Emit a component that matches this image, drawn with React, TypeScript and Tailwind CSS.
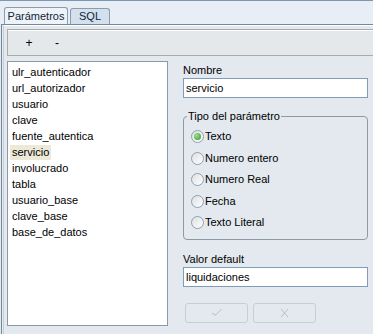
import React from "react";

const items = [
    "ulr_autenticador",
    "url_autorizador",
    "usuario",
    "clave",
    "fuente_autentica",
    "servicio",
    "involucrado",
    "tabla",
    "usuario_base",
    "clave_base",
    "base_de_datos",
];

const tipos = ["Texto", "Numero entero", "Numero Real", "Fecha", "Texto Literal"];

function Radio({ checked }: { checked: boolean }) {
    return (
        <span className="w-[13px] h-[13px] rounded-full border border-[#8fa0b0] bg-gradient-to-br from-[#dcdfe2] to-[#ffffff] flex items-center justify-center shrink-0">
            {checked && (
                <span className="w-[7px] h-[7px] rounded-full bg-[radial-gradient(circle_at_35%_35%,#9be08f,#2f9a22)]" />
            )}
        </span>
    );
}

export default function App() {
    const selected = "servicio";
    const tipo = "Texto";

    return (
        <div
            className="w-[373px] h-[334px] overflow-hidden bg-[#e3e9ee] text-[11px] text-black leading-none"
            style={{ fontFamily: '"Liberation Sans", Arial, sans-serif' }}
        >
            {/* tab strip */}
            <div className="h-[24px] border-t border-[#7d97b0] bg-[#e7eef5] flex items-end pl-[4px] gap-[2px]">
                <div className="h-[17px] w-[64px] border border-b-0 border-[#8b9bab] rounded-t-[3px] bg-[#eef3f8] flex items-center justify-center text-[#10243a]">
                    Parámetros
                </div>
                <div className="h-[16px] w-[40px] border border-b-0 border-[#8b9bab] rounded-t-[3px] bg-[#d3e0ed] flex items-center justify-center text-[#10243a]">
                    SQL
                </div>
            </div>

            {/* panel */}
            <div className="ml-[1px] h-[310px] border-l border-t border-[#74889c]">
                <div className="h-full ml-[1px] border-l border-t border-[#c6ced6] border-t-white">
                    {/* toolbar */}
                    <div className="mt-[3px] ml-[3px] h-[27px] border-t border-b border-l border-[#a8aca9] bg-[#e4e8eb] flex items-center">
                        <div className="h-full w-full border-t border-white flex items-center">
                            <span className="ml-[16px] w-[10px] text-center text-[12px]">+</span>
                            <span className="ml-[18px] w-[10px] text-center text-[12px]">-</span>
                        </div>
                    </div>

                    <div className="flex mt-[5px] ml-[3px]">
                        {/* list */}
                        <div className="w-[161px] h-[265px] border border-[#8c9aa8] bg-white pt-[2px] pl-[2px]">
                            {items.map((it) => (
                                <div key={it} className="h-[16px] flex items-center">
                                    <span
                                        className={
                                            "px-[2px] h-[15px] flex items-center " +
                                            (it === selected ? "bg-[#ece9d8]" : "")
                                        }
                                    >
                                        {it}
                                    </span>
                                </div>
                            ))}
                        </div>

                        {/* form */}
                        <div className="ml-[15px] w-[185px] flex flex-col">
                            <div className="h-[17px] flex items-end pb-[2px]">Nombre</div>
                            <div className="h-[20px] border border-[#7f9db9] bg-white flex items-center px-[2px]">
                                servicio
                            </div>

                            <div className="mt-[18px] h-[124px] border border-[#8d9aa6] rounded-[4px] relative pt-[13px] pl-[7px]">
                                <span className="absolute -top-[6px] left-[3px] px-[1px] bg-[#e3e9ee]">
                                    Tipo del parámetro
                                </span>
                                <div className="flex flex-col gap-[8.6px]">
                                    {tipos.map((t) => (
                                        <div key={t} className="h-[13px] flex items-center gap-[1px]">
                                            <Radio checked={t === tipo} />
                                            <span>{t}</span>
                                        </div>
                                    ))}
                                </div>
                            </div>

                            <div className="mt-[10px] h-[17px] flex items-end pb-[2px]">Valor default</div>
                            <div className="h-[20px] border border-[#7f9db9] bg-white flex items-center px-[2px]">
                                liquidaciones
                            </div>

                            <div className="mt-[16px] ml-[2px] flex gap-[5px]">
                                <button className="w-[63px] h-[20px] border border-[#c7ced5] rounded-[3px] flex items-center justify-center">
                                    <svg width="12" height="10" viewBox="0 0 12 10" fill="none" stroke="#b9bfc5" strokeWidth="1">
                                        <path d="M1 6.5 L2.5 5 L4 7.5 L10.5 1" />
                                    </svg>
                                </button>
                                <button className="w-[63px] h-[20px] border border-[#c7ced5] rounded-[3px] flex items-center justify-center">
                                    <svg width="9" height="10" viewBox="0 0 9 10" fill="none" stroke="#b9bfc5" strokeWidth="1">
                                        <path d="M1 1 L8 9 M8 1 L1 9" />
                                    </svg>
                                </button>
                            </div>
                        </div>
                    </div>
                </div>
            </div>
        </div>
    );
}
